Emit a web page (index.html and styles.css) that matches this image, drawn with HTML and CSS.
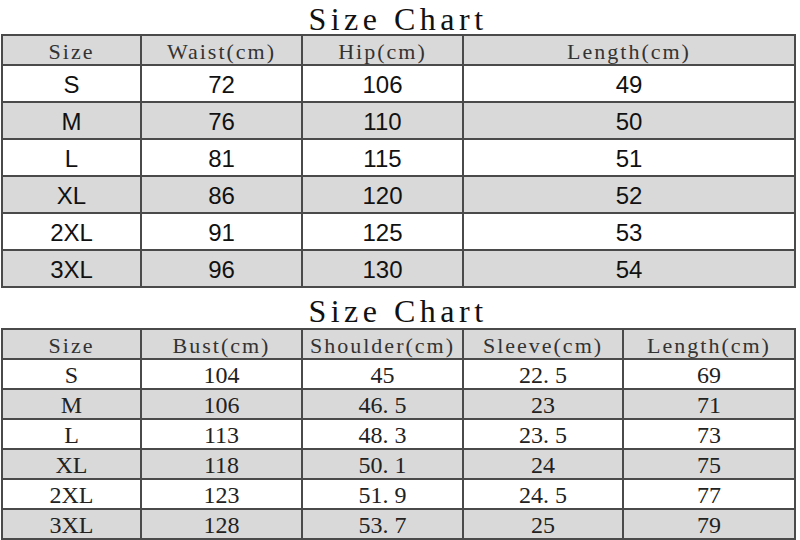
FILE: index.html
```html
<!DOCTYPE html>
<html>
<head>
<meta charset="utf-8">
<link rel="stylesheet" href="styles.css">
</head>
<body>
<div class="page">
  <h1 class="title">Size Chart</h1>
  <div class="chart chart-a">
    <div class="cell head">Size</div><div class="cell head">Waist(cm)</div><div class="cell head">Hip(cm)</div><div class="cell head">Length(cm)</div>
    <div class="cell big">S</div><div class="cell big">72</div><div class="cell big">106</div><div class="cell big">49</div>
    <div class="cell big alt">M</div><div class="cell big alt">76</div><div class="cell big alt">110</div><div class="cell big alt">50</div>
    <div class="cell big">L</div><div class="cell big">81</div><div class="cell big">115</div><div class="cell big">51</div>
    <div class="cell big alt">XL</div><div class="cell big alt">86</div><div class="cell big alt">120</div><div class="cell big alt">52</div>
    <div class="cell big">2XL</div><div class="cell big">91</div><div class="cell big">125</div><div class="cell big">53</div>
    <div class="cell big alt">3XL</div><div class="cell big alt">96</div><div class="cell big alt">130</div><div class="cell big alt">54</div>
  </div>
  <h1 class="title title-b">Size Chart</h1>
  <div class="chart chart-b">
    <div class="cell head">Size</div><div class="cell head">Bust(cm)</div><div class="cell head">Shoulder(cm)</div><div class="cell head">Sleeve(cm)</div><div class="cell head">Length(cm)</div>
    <div class="cell small">S</div><div class="cell small">104</div><div class="cell small">45</div><div class="cell small">22<span class="dot">.</span>5</div><div class="cell small">69</div>
    <div class="cell small alt">M</div><div class="cell small alt">106</div><div class="cell small alt">46<span class="dot">.</span>5</div><div class="cell small alt">23</div><div class="cell small alt">71</div>
    <div class="cell small">L</div><div class="cell small">113</div><div class="cell small">48<span class="dot">.</span>3</div><div class="cell small">23<span class="dot">.</span>5</div><div class="cell small">73</div>
    <div class="cell small alt">XL</div><div class="cell small alt">118</div><div class="cell small alt">50<span class="dot">.</span>1</div><div class="cell small alt">24</div><div class="cell small alt">75</div>
    <div class="cell small">2XL</div><div class="cell small">123</div><div class="cell small">51<span class="dot">.</span>9</div><div class="cell small">24<span class="dot">.</span>5</div><div class="cell small">77</div>
    <div class="cell small alt">3XL</div><div class="cell small alt">128</div><div class="cell small alt">53<span class="dot">.</span>7</div><div class="cell small alt">25</div><div class="cell small alt">79</div>
  </div>
</div>
</body>
</html>
```

FILE: styles.css
```css
html, body {
  margin: 0;
  padding: 0;
  background: #ffffff;
}
.page {
  width: 800px;
  height: 540px;
  overflow: hidden;
}
.title {
  margin: 0;
  height: 34px;
  width: 796px;
  text-align: center;
  font-family: "Liberation Serif", serif;
  font-weight: normal;
  font-size: 32px;
  letter-spacing: 4.5px;
  line-height: 38px;
  color: #111;
}
.title-b {
  height: 40px;
  line-height: 46px;
}
.chart {
  display: grid;
  margin-left: 1px;
  width: 795px;
  box-sizing: border-box;
  padding: 2px;
  gap: 2px;
  background: #4a4a4a;
}
.chart-a {
  grid-template-columns: 137px 159px 159px 330px;
  grid-template-rows: 28px repeat(6, 35px);
}
.chart-b {
  grid-template-columns: 137px 159px 159px 158px 170px;
  grid-template-rows: 28px repeat(6, 28px);
}
.cell {
  display: flex;
  align-items: center;
  justify-content: center;
  background: #ffffff;
  color: #111;
}
.head {
  background: #d9d9d9;
  font-family: "Liberation Serif", serif;
  font-size: 22px;
  letter-spacing: 2px;
  color: #333;
  padding-top: 3px;
}
.big {
  font-family: "Liberation Sans", Arial, sans-serif;
  font-size: 24px;
  padding-top: 2px;
}
.small {
  font-family: "Liberation Serif", serif;
  font-size: 24px;
  color: #222;
  padding-top: 2px;
}
.dot {
  padding-right: 6px;
}
.alt {
  background: #d9d9d9;
}
```
